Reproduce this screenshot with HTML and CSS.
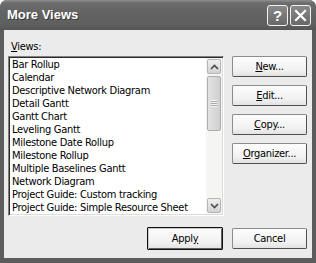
FILE: index.html
```html
<!DOCTYPE html>
<html lang="en">
<head>
  <meta charset="UTF-8" />
  <title>More Views</title>
  <link rel="stylesheet" href="styles.css">
</head>
<body>

  <div class="window">
    <div class="titlebar">
      <span class="title">More Views</span>
      <div class="caption-btns">
        <span class="cap-btn help">?</span>
        <span class="cap-btn close">
          <svg width="13" height="13" viewBox="0 0 13 13">
            <path d="M2 2 L11 11 M11 2 L2 11" stroke="#fff" stroke-width="2.2" stroke-linecap="square"/>
          </svg>
        </span>
      </div>
    </div>

    <div class="client">
      <div class="main">
        <div class="left">
          <div class="label"><u>V</u>iews:</div>
          <div class="listbox">
            <ul class="items">
              <li>Bar Rollup</li>
              <li>Calendar</li>
              <li>Descriptive Network Diagram</li>
              <li>Detail Gantt</li>
              <li>Gantt Chart</li>
              <li>Leveling Gantt</li>
              <li>Milestone Date Rollup</li>
              <li>Milestone Rollup</li>
              <li>Multiple Baselines Gantt</li>
              <li>Network Diagram</li>
              <li>Project Guide: Custom tracking</li>
              <li>Project Guide: Simple Resource Sheet</li>
            </ul>
            <div class="scrollbar">
              <div class="sb-btn">
                <svg width="9" height="6" viewBox="0 0 9 6"><path d="M1 5 L4.5 1.5 L8 5" fill="none" stroke="#4a4a4a" stroke-width="1.6"/></svg>
              </div>
              <div class="sb-track">
                <div class="sb-thumb">
                  <span class="grip"></span>
                </div>
              </div>
              <div class="sb-btn">
                <svg width="9" height="6" viewBox="0 0 9 6"><path d="M1 1 L4.5 4.5 L8 1" fill="none" stroke="#4a4a4a" stroke-width="1.6"/></svg>
              </div>
            </div>
          </div>
        </div>

        <div class="side">
          <button class="btn"><u>N</u>ew...</button>
          <button class="btn"><u>E</u>dit...</button>
          <button class="btn"><u>C</u>opy...</button>
          <button class="btn"><u>O</u>rganizer...</button>
        </div>
      </div>

      <div class="footer">
        <button class="btn default">Appl<u>y</u></button>
        <button class="btn">Cancel</button>
      </div>
    </div>
  </div>

</body>
</html>
```

FILE: styles.css
```css
body {
  margin: 0;
  background: #fff;
  font-family: "DejaVu Sans Condensed", "Liberation Sans", sans-serif;
  font-size: 11px;
  letter-spacing: -0.3px;
  color: #000;
}
.window {
  width: 316px;
  height: 263px;
  box-sizing: border-box;
  display: flex;
  flex-direction: column;
  background: #5c5c5c;
  border-radius: 7px 7px 0 0;
  padding: 0 4px 5px 4px;
}
.titlebar {
  height: 30px;
  margin: 0 -4px;
  padding: 0 5px 0 7px;
  display: flex;
  align-items: center;
  justify-content: space-between;
  border-radius: 7px 7px 0 0;
  background: linear-gradient(#8e8e8e, #6c6c6c 3px, #646464 40%, #5e5e5e 85%, #555);
}
.title {
  color: #fff;
  font-family: "Liberation Sans", sans-serif;
  font-weight: bold;
  font-size: 13px;
  letter-spacing: 0;
  text-shadow: 1px 1px #3a3a3a;
  margin-top: -1px;
}
.caption-btns {
  display: flex;
  gap: 2px;
  margin-top: 1px;
}
.cap-btn {
  width: 21px;
  height: 21px;
  box-sizing: border-box;
  border: 1px solid #f2f2f2;
  border-radius: 3px;
  background: linear-gradient(#888, #686868);
  display: flex;
  align-items: center;
  justify-content: center;
  color: #fff;
}
.help {
  font-family: "Liberation Sans", sans-serif;
  font-weight: bold;
  font-size: 15px;
  letter-spacing: 0;
}
.client {
  flex: 1;
  background: #ebebeb;
  padding: 10px 5px 0 4px;
}
.main {
  display: flex;
  gap: 8px;
}
.left {
  width: 216px;
}
.label {
  line-height: 13px;
  padding-left: 3px;
  margin-bottom: 3px;
}
.listbox {
  height: 160px;
  box-sizing: border-box;
  display: flex;
  background: #fff;
  border: 1px solid;
  border-color: #808080 #fff #fff #808080;
  box-shadow: inset 1px 1px #2a2a2a, inset -1px -1px #dcdcdc;
  padding: 1px;
}
.items {
  flex: 1;
  list-style: none;
  margin: 0;
  padding: 0 0 0 2px;
  overflow: hidden;
}
.items li {
  line-height: 13px;
  height: 13px;
  white-space: nowrap;
}
.scrollbar {
  width: 16px;
  display: flex;
  flex-direction: column;
  background: #f5f5f3;
}
.sb-btn {
  height: 15px;
  margin: 1px 1px 0 1px;
  box-sizing: border-box;
  border: 1px solid #b5b5b5;
  border-radius: 2px;
  background: linear-gradient(#f0f0f0, #d2d2d2);
  display: flex;
  align-items: center;
  justify-content: center;
}
.sb-btn:last-child {
  margin: 0 1px 1px 1px;
}
.sb-track {
  flex: 1;
  padding: 2px 1px 0 1px;
}
.sb-thumb {
  height: 55px;
  box-sizing: border-box;
  border: 1px solid #adadad;
  border-radius: 2px;
  background: linear-gradient(90deg, #e2e2e2, #d0d0d0);
  display: flex;
  align-items: center;
  justify-content: center;
}
.grip {
  width: 6px;
  height: 7px;
  background: repeating-linear-gradient(#f6f6f6 0 1px, #a8a8a8 1px 2px);
}
.side {
  margin-top: 16px;
  display: flex;
  flex-direction: column;
  gap: 8px;
}
.btn {
  width: 75px;
  height: 21px;
  box-sizing: border-box;
  padding: 0;
  font-family: inherit;
  font-size: 11px;
  letter-spacing: inherit;
  color: #000;
  border: 1px solid #8c8c8c;
  border-right-color: #505050;
  border-bottom-color: #505050;
  border-radius: 2px;
  background: linear-gradient(#fdfdfd, #f1f1f1 70%, #e2e2e2);
}
.footer {
  margin-top: 11px;
  display: flex;
  justify-content: flex-end;
  align-items: center;
  gap: 9px;
}
.btn.default {
  width: 76px;
  height: 23px;
  border: 1px solid #111;
  border-radius: 1px;
  box-shadow: inset 1px 1px #c8c8c8, inset -1px -1px #606060;
}
```
